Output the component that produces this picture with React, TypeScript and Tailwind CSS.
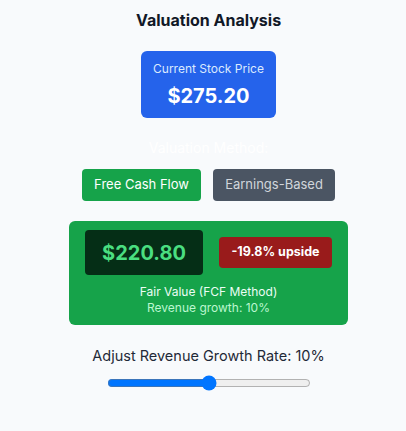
import { useState } from 'react';

export default function App() {
  const [growth, setGrowth] = useState(10);
  const [method, setMethod] = useState<'fcf' | 'eps'>('fcf');

  return (
    <div className="min-h-screen bg-[#f8fafc] pl-[11px] pt-2 font-['Inter',sans-serif]">
      <div className="flex flex-col items-center">
        <h2 className="text-base leading-6 font-bold text-[#111827]">Valuation Analysis</h2>

        <div className="mt-[19px] flex h-[67px] w-[135px] flex-col items-center rounded-md bg-[#2563eb] pt-[10px]">
          <span className="text-xs leading-4 text-[#dbeafe]">Current Stock Price</span>
          <span className="mt-[5px] text-xl leading-7 font-bold text-white">$275.20</span>
        </div>

        <p className="mt-5 text-sm leading-5 text-white">Valuation Method:</p>

        <div className="mt-[11px] flex gap-3">
          <button
            onClick={() => setMethod('fcf')}
            className={`h-8 w-[119px] rounded text-[13px] ${method === 'fcf' ? 'bg-[#16a34a] text-white' : 'bg-[#4b5563] text-[#d1d5db]'}`}
          >
            Free Cash Flow
          </button>
          <button
            onClick={() => setMethod('eps')}
            className={`h-8 w-[122px] rounded text-[13px] ${method === 'eps' ? 'bg-[#16a34a] text-white' : 'bg-[#4b5563] text-[#d1d5db]'}`}
          >
            Earnings-Based
          </button>
        </div>

        <div className="mt-5 flex w-[279px] flex-col items-center rounded-md bg-[#16a34a] px-4 pt-[9px] pb-[9px]">
          <div className="flex w-full items-center gap-4">
            <div className="flex h-[45px] w-[118px] items-center justify-center rounded bg-[#052e16]">
              <span className="text-xl font-bold text-[#4ade80]">$220.80</span>
            </div>
            <div className="flex h-[31px] w-[113px] items-center justify-center rounded bg-[#991b1b]">
              <span className="text-[12.5px] font-bold text-white">-19.8% upside</span>
            </div>
          </div>
          <p className="mt-[9px] text-xs leading-4 text-[#ecfdf5]">Fair Value (FCF Method)</p>
          <p className="text-xs leading-4 text-[#bbf7d0]">Revenue growth: {growth}%</p>
        </div>

        <label className="mt-[21px] text-[14.5px] leading-5 text-[#1f2937]">
          Adjust Revenue Growth Rate: {growth}%
        </label>
        <input
          type="range"
          min={0}
          max={20}
          value={growth}
          onChange={(e) => setGrowth(Number(e.target.value))}
          className="mt-[9px] w-[204px]"
        />
      </div>
    </div>
  );
}
